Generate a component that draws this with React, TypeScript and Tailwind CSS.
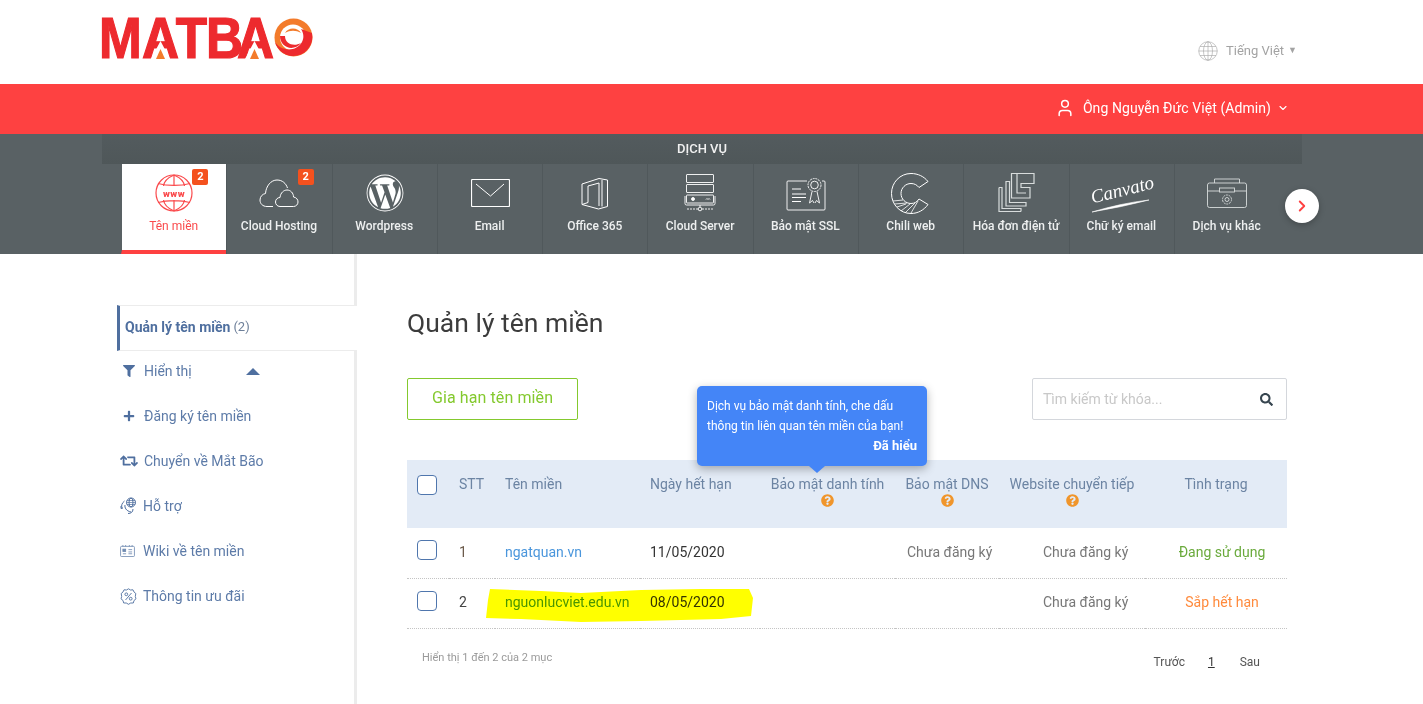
import type { ReactNode } from "react";
import { ChevronDown, ChevronRight, User } from "lucide-react";
import { FaFilter, FaPlus, FaQuestionCircle, FaRetweet, FaSearch, FaWordpress } from "react-icons/fa";

function Logo() {
  return (
    <svg width="212" height="46" viewBox="0 0 212 46" className="block overflow-visible">
      <g transform="scale(0.9 1)">
        <text
          x="-3.300 44.400 82 115.500 150"
          y="42"
          fill="#ed2a2e"
          stroke="#ed2a2e"
          strokeWidth="1.200"
          fontFamily="Liberation Sans, sans-serif"
          fontWeight="700"
          fontSize="57"
        >
          MATBA
        </text>
      </g>
      <path d="M49 43L58.500 25L68 43Z" fill="#fff" />
      <path d="M54 43L58.500 33L63 43Z" fill="#f37b2b" />
      <path d="M143 43L152.500 25L162 43Z" fill="#fff" />
      <path d="M148 43L152.500 33L157 43Z" fill="#f37b2b" />
      <circle cx="191.500" cy="21.500" r="19" fill="#f37b2b" />
      <circle cx="191" cy="21.500" r="13" fill="#fff" />
      <path d="M209.900 17A19 19 0 1 1 172.700 25C177 35 194 37 200 26C202 22 202 18 199 13Z" fill="#ed2a2e" />
      <path d="M178 20C178 32 192 36 199 27C192 31 183 28 183 20Z" fill="#ed2a2e" />
      <path d="M183 17C186 11 196 11 199 17C194 14 188 14 183 17Z" fill="#f37b2b" />
    </svg>
  );
}

function GlobeLines({ color, size }: { color: string; size: number }) {
  return (
    <svg width={size} height={size} viewBox="0 0 40 40" fill="none" stroke={color} strokeWidth="1.300">
      <circle cx="20" cy="20" r="18.500" />
      <ellipse cx="20" cy="20" rx="9" ry="18.500" />
      <path d="M20 1.500V38.500M1.500 20H38.500M4 11H36M4 29H36" />
    </svg>
  );
}

function WwwIcon() {
  return (
    <svg width="38" height="38" viewBox="0 0 38 38" fill="none" stroke="#fa4a4c" strokeWidth="1.200">
      <circle cx="19" cy="19" r="18" />
      <path d="M19 1V12M19 26V37M3 9.500C12 12 26 12 35 9.500M3 28.500C12 26 26 26 35 28.500" />
      <path d="M19 1C12 4 9 8 8.500 12M19 1C26 4 29 8 29.500 12M8.500 26C9 30 12 34 19 37M29.500 26C29 30 26 34 19 37" />
      <text x="19" y="22.500" textAnchor="middle" fontFamily="Roboto, sans-serif" fontWeight="900" fontSize="9.500" letterSpacing="0.500" fill="#fa4a4c" stroke="none">www</text>
    </svg>
  );
}

function CloudIcon() {
  return (
    <svg width="40" height="30" viewBox="0 0 40 30" fill="none" stroke="#fff" strokeWidth="1">
      <path d="M8 28.500C3.500 28.500 1 25.500 1 22C1 18.500 3.500 16 6.500 15.500C7 8 12 2 18 2C23.500 2 27 5.500 28.500 10" />
      <path d="M8 28.500H14" />
      <path d="M21 28.500C18 28.500 16.500 26 16.500 24C16.500 21.500 18.500 19.500 21 19.500C21.500 14.500 25 12 28 12C31.500 12 34.500 15 34.500 19C37.500 19.500 39 21.500 39 24C39 26.500 37 28.500 34.500 28.500Z" />
    </svg>
  );
}

function MailIcon() {
  return (
    <svg width="39" height="28" viewBox="0 0 39 28" fill="none" stroke="#fff" strokeWidth="1">
      <rect x="0.500" y="0.500" width="38" height="27" rx="1" strokeWidth="1.200" />
      <path d="M5 5L19.500 17L33 5" />
    </svg>
  );
}

function OfficeIcon() {
  return (
    <svg width="28" height="33" viewBox="0 0 28 33" fill="none" stroke="#fff" strokeWidth="1">
      <path d="M1 7L18 1.500L26.500 3V29.500L17.500 32L1 27.500Z" />
      <path d="M7 25.500V9L18 6V29" />
      <path d="M1 27.500L7 25.500" />
      <path d="M21 3V29.500" />
    </svg>
  );
}

function ServerIcon() {
  return (
    <svg width="34" height="38" viewBox="0 0 34 38" fill="none" stroke="#fff" strokeWidth="0.900">
      <rect x="2.500" y="0.500" width="27" height="8" rx="0.500" />
      <rect x="2.500" y="10.500" width="27" height="8" rx="0.500" />
      <rect x="2.500" y="21" width="27" height="8" rx="0.500" />
      <circle cx="9" cy="25" r="1.500" fill="#fff" />
      <path d="M22 25.500L23 24.500L24 25.500L25 24.500L26 25.500" />
      <path d="M1 22V29.500Q1 31 2.500 31H29.500Q31 31 31 29.500V22" />
      <path d="M16 31V33" />
      <circle cx="16" cy="35" r="1.800" />
      <path d="M3 35H14M18 35H29" strokeDasharray="2 1" />
    </svg>
  );
}

function SslIcon() {
  return (
    <svg width="40" height="35" viewBox="0 0 40 35" fill="none" stroke="#fff" strokeWidth="0.900">
      <path d="M21 5H2Q1 5 1 6V33Q1 34 2 34H38Q39 34 39 33V6Q39 5 38 5H36" />
      <path d="M6 13H15M6 18H20M6 21.500H20M6 25.500H15" strokeWidth="1.200" />
      <circle cx="28.500" cy="9" r="6.500" fill="#596164" strokeDasharray="2 0.800" />
      <circle cx="28.500" cy="9" r="3.800" />
      <path d="M26 15.500L23.500 27L26.500 24.500L28 27M31 15.500L33.500 27L30.500 24.500L29 27" />
    </svg>
  );
}

function ChiliIcon() {
  return (
    <svg width="40" height="41" viewBox="0 0 40 41" fill="none" stroke="#fff" strokeWidth="1">
      <path d="M37 8.500C33 3.500 27 0.500 20 0.500C9 0.500 0.500 9.500 0.500 20.500C0.500 31.500 9 40.500 20 40.500C27 40.500 33 37 37 31.500L28 26C26 29 23.500 30.500 20 30.500C14.500 30.500 10 26 10 20.500C10 15 14.500 10.500 20 10.500C23.500 10.500 26 12 28 14.500Z" />
      <path d="M2 28L12 27M3.500 31L16 30M6 34L15 31M10 38L19 31M14 40L24 30M20 40L27 28" strokeWidth="0.800" />
    </svg>
  );
}

function InvoiceIcon() {
  return (
    <svg width="37" height="40" viewBox="0 0 37 40" fill="none" stroke="#d8dcdc" strokeWidth="1.200">
      <path d="M1 14.500V38.500H23" />
      <path d="M1 14.500H4V35.500H23V38.500" />
      <path d="M8 8.500V33H28V29.500H11.500V8.500Z" />
      <path d="M13.500 0.500H36V10.500H23V14.500H32V25H13.500Z" />
      <path d="M19 0.500V20H28" />
    </svg>
  );
}

function CanvatoIcon() {
  return (
    <div className="relative flex h-[40px] w-[60px] flex-col items-center pt-[7px]">
      <span className="-rotate-[14deg] whitespace-nowrap font-['Liberation_Serif',serif] text-[19px] leading-none italic text-white">
        Canvato
      </span>
      <svg width="58" height="14" viewBox="0 0 58 14" className="absolute bottom-0 left-0">
        <path d="M0 13Q30 4 57 1Q30 8 0 13Z" fill="#fff" stroke="#fff" strokeWidth="0.600" />
      </svg>
    </div>
  );
}

function BoxIcon() {
  return (
    <svg width="40" height="30" viewBox="0 0 40 30" fill="none" stroke="#d8dcdc" strokeWidth="0.900">
      <path d="M7.500 5V1H32.500V5" />
      <rect x="0.500" y="5" width="39" height="24.500" rx="2" />
      <path d="M0.500 13H39.500" />
      <rect x="12.500" y="10" width="15" height="4" fill="#596164" />
      <circle cx="20" cy="21.500" r="4.500" strokeDasharray="2 0.800" />
      <circle cx="20" cy="21.500" r="2" />
    </svg>
  );
}

const navItems: { label: string; icon: ReactNode; badge?: boolean; active?: boolean }[] = [
  { label: "Tên miền", icon: <WwwIcon />, badge: true, active: true },
  { label: "Cloud Hosting", icon: <CloudIcon />, badge: true },
  { label: "Wordpress", icon: <FaWordpress className="text-[38px] text-white" /> },
  { label: "Email", icon: <MailIcon /> },
  { label: "Office 365", icon: <OfficeIcon /> },
  { label: "Cloud Server", icon: <ServerIcon /> },
  { label: "Bảo mật SSL", icon: <SslIcon /> },
  { label: "Chili web", icon: <ChiliIcon /> },
  { label: "Hóa đơn điện tử", icon: <InvoiceIcon /> },
  { label: "Chữ ký email", icon: <CanvatoIcon /> },
  { label: "Dịch vụ khác", icon: <BoxIcon /> },
];

function Support() {
  return (
    <svg width="18" height="18" viewBox="0 0 18 18" fill="none" stroke="#4f6f9f" strokeWidth="1">
      <circle cx="11" cy="5.500" r="4.500" />
      <ellipse cx="11" cy="5.500" rx="2" ry="4.500" />
      <path d="M6.500 5.500H15.500M7 3.500H15M7 7.500H15" strokeWidth="0.700" />
      <path d="M4.500 4C2 6 1 8.500 2 11M1 9L1 11.500L3 11M5 8C4.500 10.500 6 14 11 15" />
      <path d="M13 12C13 15 11 16.500 8 16.500" />
    </svg>
  );
}

function WikiIcon() {
  return (
    <svg width="15" height="12" viewBox="0 0 16 13" fill="none" stroke="#6f8ab0" strokeWidth="0.900">
      <rect x="0.500" y="1.500" width="15" height="11" rx="1" />
      <path d="M3 1.500V0M6 1.500V0M10 1.500V0M13 1.500V0" />
      <rect x="3" y="4.500" width="3" height="2.500" fill="#6f8ab0" />
      <path d="M3 9.500H6.500M9 5H13M9 7.500H13M9 9.500H13" />
    </svg>
  );
}

function PercentIcon() {
  return (
    <svg width="17" height="17" viewBox="0 0 17 17" fill="none" stroke="#4f6f9f" strokeWidth="0.900">
      <path d="M8.500 0.800L10.500 2L13 1.800L14 4L15.800 5.500L15.300 8.500L16 10.800L14 12.500L13.300 15L10.700 15L8.500 16.300L6.300 15L3.700 15L3 12.500L1 10.800L1.700 8.500L1.200 5.500L3 4L4 1.800L6.500 2Z" />
      <circle cx="6.300" cy="6.300" r="1.400" />
      <circle cx="10.700" cy="10.700" r="1.400" />
      <path d="M11.500 5L5.500 12" />
    </svg>
  );
}

const sideItems: { label: string; icon: ReactNode; gap: string }[] = [
  { label: "Đăng ký tên miền", icon: <FaPlus className="ml-[3px] text-[12px] text-[#4f6f9f]" />, gap: "gap-[9px]" },
  { label: "Chuyển về Mắt Bão", icon: <FaRetweet className="text-[18px] text-[#4f6f9f]" />, gap: "gap-[6px]" },
  { label: "Hỗ trợ", icon: <Support />, gap: "gap-[5px]" },
  { label: "Wiki về tên miền", icon: <WikiIcon />, gap: "gap-[8px]" },
  { label: "Thông tin ưu đãi", icon: <PercentIcon />, gap: "gap-[6px]" },
];

function Help() {
  return <FaQuestionCircle className="mx-auto mt-[1px] text-[13px] text-[#f0952b]" />;
}

function Checkbox() {
  return <div className="h-[20px] w-[20px] rounded-[4px] border border-[#4f76ad] bg-white" />;
}

export default function App() {
  return (
    <div className="min-h-[704px] overflow-hidden bg-white font-['Roboto',sans-serif] text-[14px]">
      <header className="flex h-[84px] justify-between pl-[102px] pr-[126px]">
        <div className="pt-[16px]">
          <Logo />
        </div>
        <div className="flex items-center gap-[8px] pt-[18px] text-[13px] text-[#a3a3a3]">
          <GlobeLines color="#a8a8a8" size={20} />
          <span>Tiếng Việt</span>
          <span className="-ml-[4px] text-[9px]">▼</span>
        </div>
      </header>

      <div className="flex h-[50px] items-center justify-end bg-[#fe4141] pb-[2px] pr-[134px] text-white">
        <User className="mr-[8px] h-[20px] w-[20px]" strokeWidth={1.8} />
        <span className="tracking-[0.07px]">Ông Nguyễn Đức Việt (Admin)</span>
        <ChevronDown className="ml-[6px] h-[12px] w-[12px]" strokeWidth={2.2} />
      </div>

      <div className="relative h-[120px] bg-[#596164]">
        <div className="ml-[102px] w-[1200px] bg-[#596164]">
          <div className="flex h-[30px] items-center justify-center bg-gradient-to-b from-[#535b5e] to-[#4f5759] text-[13px] font-medium text-[#f1f1f1]">
            DỊCH VỤ
          </div>
          <div className="flex h-[90px] pl-[19px]">
            {navItems.map((item) => (
              <div
                key={item.label}
                className={
                  item.active
                    ? "relative flex w-[105.3px] flex-col items-center border-b-[4px] border-l border-b-[#fe4141] border-l-[#596164] bg-white"
                    : "relative flex w-[105.3px] flex-col items-center border-l border-[#50585b]"
                }
              >
                <div className="flex h-[55px] items-center justify-center pt-[3px]">{item.icon}</div>
                <div
                  className={
                    item.active
                      ? "-ml-[1px] whitespace-nowrap text-[12px] font-normal leading-[14px] text-[#fa4a4c]"
                      : "-ml-[1px] whitespace-nowrap text-[12px] font-medium leading-[14px] text-[#eef0f0]"
                  }
                >
                  {item.label}
                </div>
                {item.badge && (
                  <span className="absolute right-[18px] top-[5px] flex h-[16px] w-[16px] items-center justify-center rounded-[2px] bg-[#f4511e] text-[11px] font-bold text-white">
                    2
                  </span>
                )}
              </div>
            ))}
          </div>
        </div>
        <button className="absolute left-[1285px] top-[55px] flex h-[34px] w-[34px] items-center justify-center rounded-full bg-white shadow-[0_2px_6px_rgba(0,0,0,0.25)]">
          <ChevronRight className="h-[18px] w-[18px] text-[#fe4141]" strokeWidth={2.5} />
        </button>
      </div>

      <div className="flex pl-[102px]">
        <aside className="relative h-[450px] w-[255px] shrink-0 border-r-[3px] border-[#ececec] pl-[15px] pt-[51px]">
          <div className="relative -mr-[3px] flex h-[46px] items-center border-y border-l-[3px] border-[#ececec] border-l-[#4f6f9f] bg-white pb-[2px] pl-[5px] text-[#4f6f9f]">
            <span className="font-bold">Quản lý tên miền</span>
            <span className="ml-[3px] text-[13px] text-[#6d7f99]">(2)</span>
          </div>
          <nav className="flex flex-col gap-[5px] text-[14px] text-[#5d7ba8]">
            <div className="flex h-[40px] items-center pl-[6px]">
              <FaFilter className="text-[12px] text-[#4f6f9f]" />
              <span className="ml-[9px]">Hiển thị</span>
              <span className="ml-[54px] h-0 w-0 border-x-[7px] border-b-[7px] border-x-transparent border-b-[#4f6f9f]" />
            </div>
            {sideItems.map((item) => (
              <div key={item.label} className={`flex h-[40px] items-center pl-[3px] ${item.gap}`}>
                {item.icon}
                <span>{item.label}</span>
              </div>
            ))}
          </nav>
        </aside>

        <main className="ml-[50px] w-[880px]">
          <h1 className="pt-[52px] text-[26.500px] font-normal leading-[34px] text-[#3c3c3c]">Quản lý tên miền</h1>

          <div className="mt-[38px] flex h-[42px] justify-between">
            <button className="h-[42px] w-[171px] rounded-[2px] border border-[#84c92e] pb-[2px] text-[16px] tracking-[0.1px] text-[#84c92e]">
              Gia hạn tên miền
            </button>
            <div className="flex h-[42px] w-[255px] items-center justify-between rounded-[2px] border border-[#d4d7dc] pl-[10px] pr-[13px] text-[14px] text-[#c8c8c8]">
              <span>Tìm kiếm từ khóa...</span>
              <FaSearch className="text-[13px] text-[#36454f]" />
            </div>
          </div>

          <div className="relative mt-[40px]">
            <table className="w-[880px] table-fixed border-collapse">
              <colgroup>
                <col className="w-[42px]" />
                <col className="w-[46px]" />
                <col className="w-[145px]" />
                <col className="w-[120px]" />
                <col className="w-[135px]" />
                <col className="w-[104px]" />
                <col className="w-[146px]" />
                <col className="w-[142px]" />
              </colgroup>
              <thead>
                <tr className="h-[68px] bg-[#e3ebf6] text-[14px] leading-[18px] text-[#6c84a3]">
                  <th className="pl-[10px] pt-[15px] align-top font-normal">
                    <Checkbox />
                  </th>
                  <th className="pl-[10px] pt-[15px] text-left align-top font-normal">STT</th>
                  <th className="pl-[10px] pt-[15px] text-left align-top font-normal">Tên miền</th>
                  <th className="pl-[10px] pt-[15px] text-left align-top font-normal">Ngày hết hạn</th>
                  <th className="pt-[15px] text-center align-top font-normal whitespace-nowrap">
                    Bảo mật danh tính
                    <Help />
                  </th>
                  <th className="pt-[15px] text-center align-top font-normal whitespace-nowrap">
                    Bảo mật DNS
                    <Help />
                  </th>
                  <th className="pt-[15px] text-center align-top font-normal whitespace-nowrap">
                    Website chuyển tiếp
                    <Help />
                  </th>
                  <th className="pt-[15px] text-center align-top font-normal">Tình trạng</th>
                </tr>
              </thead>
              <tbody className="text-[14px]">
                <tr className="h-[50px] border-b border-dotted border-[#c4c4c4]">
                  <td className="pb-[6px] pl-[10px]">
                    <Checkbox />
                  </td>
                  <td className="pl-[10px] text-[#6b5a4a]">1</td>
                  <td className="pl-[10px] text-[#4a96dc]">ngatquan.vn</td>
                  <td className="pl-[10px] text-[#333]">11/05/2020</td>
                  <td />
                  <td className="pl-[12px] text-[#777]">Chưa đăng ký</td>
                  <td className="pl-[44px] text-[#777]">Chưa đăng ký</td>
                  <td className="pl-[12px] text-center text-[#6aaa3c]">Đang sử dụng</td>
                </tr>
                <tr className="h-[50px] border-b border-dotted border-[#c4c4c4]">
                  <td className="pb-[5px] pl-[10px]">
                    <Checkbox />
                  </td>
                  <td className="pb-[2px] pl-[10px] text-[#444]">2</td>
                  <td className="pb-[2px] pl-[10px] text-[#4a96dc]">nguonlucviet.edu.vn</td>
                  <td className="pb-[2px] pl-[10px] text-[#333]">08/05/2020</td>
                  <td />
                  <td />
                  <td className="pb-[2px] pl-[44px] text-[#777]">Chưa đăng ký</td>
                  <td className="pb-[2px] pl-[12px] text-center text-[#ff8a3c]">Sắp hết hạn</td>
                </tr>
              </tbody>
            </table>

            <svg
              width="270"
              height="37"
              viewBox="0 0 270 37"
              className="pointer-events-none absolute left-[79px] top-[127px] mix-blend-multiply"
            >
              <path
                d="M4 2L55 4L95 6L155 3L215 2L263 2L267 11L265 29L235 32L155 34L95 35L35 32L0 31L2 13Z"
                fill="#ffff00"
              />
            </svg>

            <div className="absolute left-[290px] -top-[74px] h-[80px] w-[230px] rounded-[5px] bg-[#4485f7] px-[10px] pt-[10px] text-[12px] leading-[20px] text-white shadow-[0_3px_10px_rgba(0,0,0,0.3)]">
              <p>Dịch vụ bảo mật danh tính, che dấu</p>
              <p>thông tin liên quan tên miền của bạn!</p>
              <p className="text-right text-[13px] font-bold">Đã hiểu</p>
              <span className="absolute left-[112px] top-[80px] h-0 w-0 border-x-[8px] border-t-[7px] border-x-transparent border-t-[#4485f7]" />
            </div>
          </div>

          <div className="flex justify-between pl-[15px] pr-[27px]">
            <span className="mt-[22px] text-[11px] leading-[14px] text-[#9a9a9a]">Hiển thị 1 đến 2 của 2 mục</span>
            <div className="mt-[26px] flex text-[12px] leading-[14px] text-[#555]">
              <span>Trước</span>
              <span className="ml-[23px] text-[#333] underline">1</span>
              <span className="ml-[25px]">Sau</span>
            </div>
          </div>
        </main>
      </div>
    </div>
  );
}
